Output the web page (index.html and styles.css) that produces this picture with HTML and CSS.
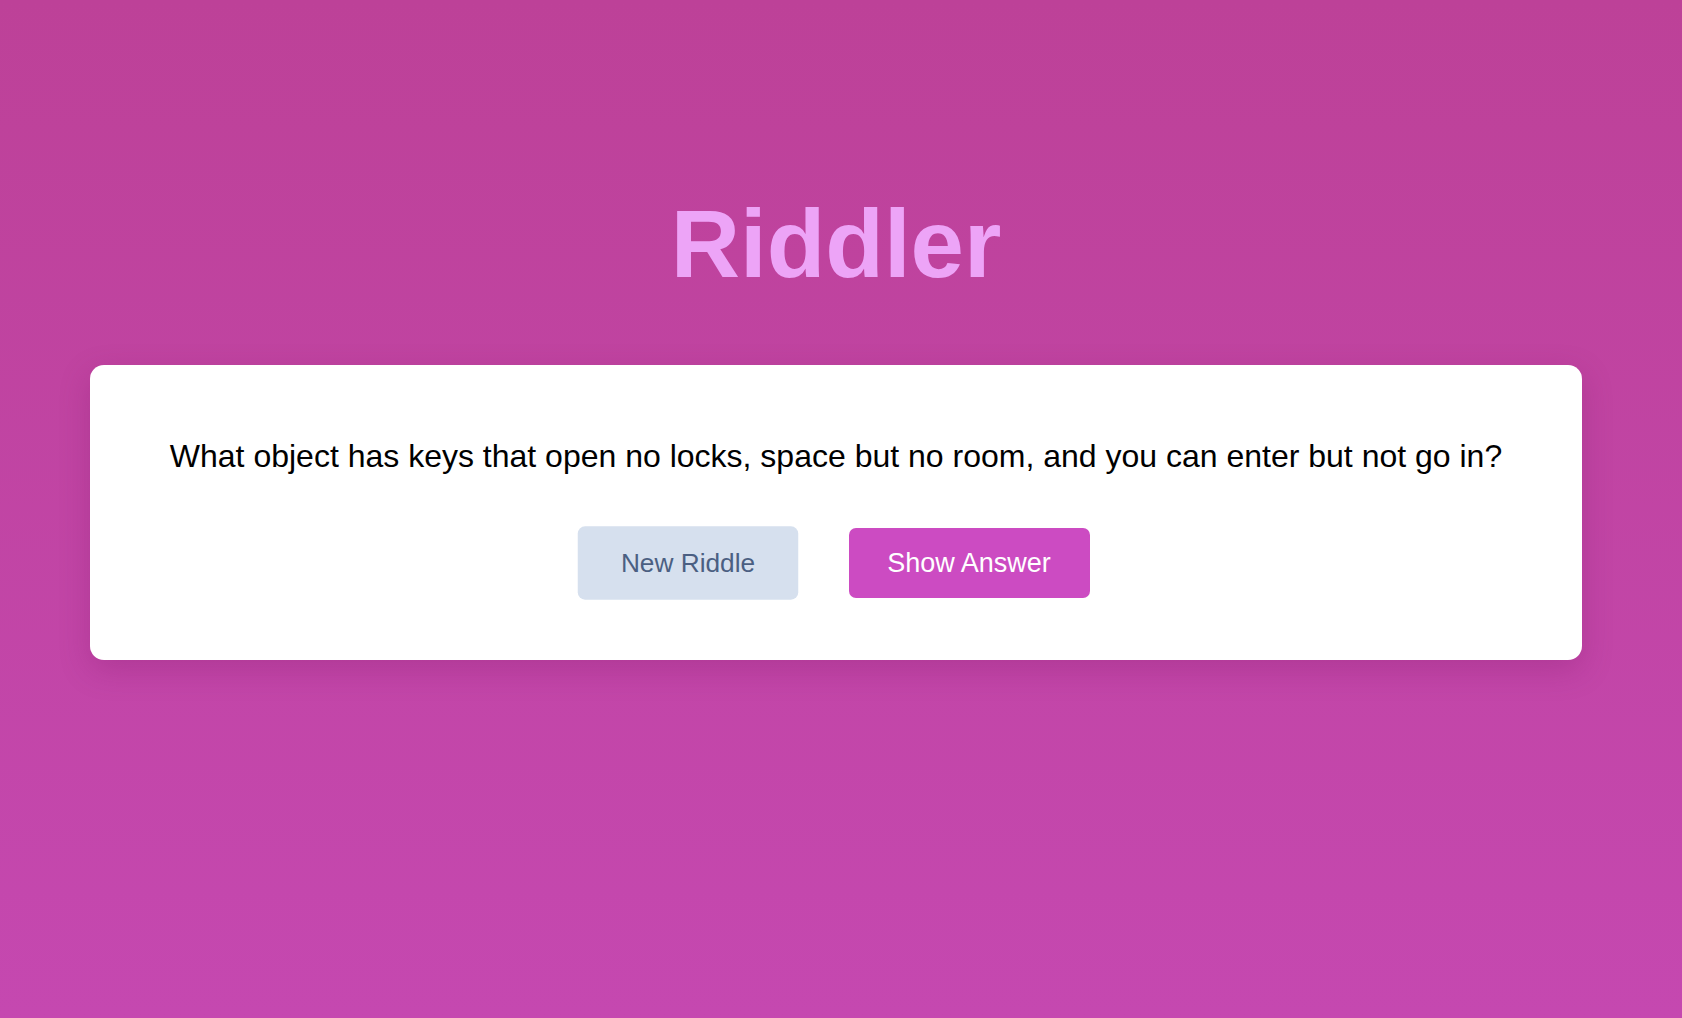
FILE: index.html
```html
<!DOCTYPE html>
<html lang="en">
<head>
<meta charset="utf-8">
<title>Riddler</title>
<link rel="stylesheet" href="styles.css">
</head>
<body>
<main class="page">
  <h1 class="title">Riddler</h1>
  <section class="card">
    <p class="question">What object has keys that open no locks, space but no room, and you can enter but not go in?</p>
    <div class="actions">
      <button class="btn btn-secondary">New Riddle</button>
      <button class="btn btn-primary">Show Answer</button>
    </div>
  </section>
</main>
</body>
</html>
```
FILE: styles.css
```css
html, body {
  margin: 0;
  padding: 0;
  height: 100%;
}
body {
  background: linear-gradient(to bottom, #bd4198 0%, #c548b0 100%);
  font-family: "Liberation Sans", Arial, Helvetica, sans-serif;
  color: #000;
}
.page {
  min-height: 100%;
  box-sizing: border-box;
  padding: 184px 100px 0 90px;
  display: flex;
  flex-direction: column;
  align-items: stretch;
}
.title {
  margin: 0;
  text-align: center;
  font-size: 96px;
  line-height: 120px;
  font-weight: 700;
  color: #eda4f7;
}
.card {
  margin-top: 61px;
  background: #fff;
  border-radius: 14px;
  box-shadow: 0 10px 30px rgba(120, 20, 100, 0.25);
  padding: 67px 64px 62px;
  display: flex;
  flex-direction: column;
  align-items: center;
}
.question {
  margin: 0;
  font-size: 32px;
  line-height: 48px;
  text-align: center;
}
.actions {
  margin-top: 48px;
  display: flex;
  gap: 56px;
  align-items: center;
}
.btn {
  font-family: "Liberation Sans", Arial, Helvetica, sans-serif;
  border: none;
  border-radius: 7px;
  height: 70px;
  padding: 0;
  cursor: pointer;
}
.btn-secondary {
  background: #d6e0ee;
  color: #4b5f82;
  width: 210px;
  font-size: 25px;
  transform: scale(1.05);
}
.btn-primary {
  background: #cc4bc2;
  color: #fff;
  width: 241px;
  font-size: 27px;
}
```
